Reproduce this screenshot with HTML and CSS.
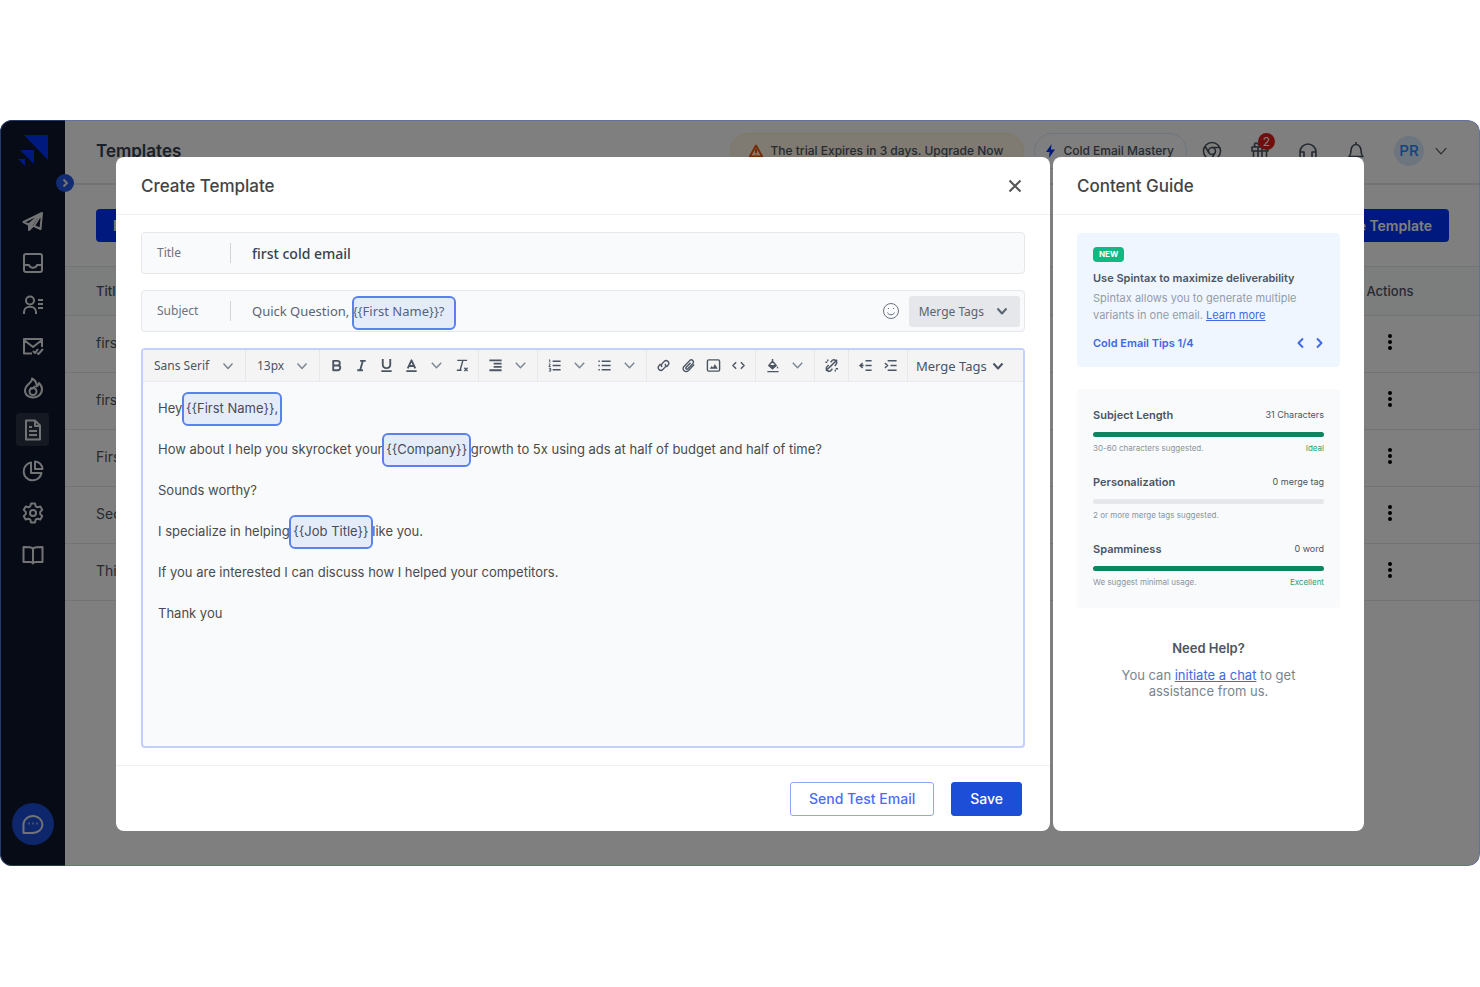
FILE: index.html
```html
<!DOCTYPE html>
<html lang="en">
<head>
<meta charset="utf-8">
<title>Templates</title>
<link rel="stylesheet" href="styles.css">
</head>

<body>
<svg class="defs" aria-hidden="true">
	<symbol id="chev" viewBox="0 0 12 12"><path d="M1.500 3.500 6 8.500l4.500-5"/></symbol>
	<symbol id="dots" viewBox="0 0 6 18"><circle cx="3" cy="3" r="2"/><circle cx="3" cy="9" r="2"/><circle cx="3" cy="15" r="2"/></symbol>
</svg>
<div class="app">
	<aside class="side">
		<a class="logo" href="#" aria-label="Home">
			<svg width="30" height="31" viewBox="0 0 30 31"><path d="M6 0h24v25zM2 15h14v14zM0 24h7v7z"/></svg>
		</a>
		<button class="toggle" aria-label="Expand menu"><svg class="ico" width="10" height="10" viewBox="0 0 10 10"><path d="M3.500 1.500 7 5 3.500 8.500"/></svg></button>
		<nav class="nav">
			<a href="#" aria-label="Campaigns"><svg class="ico" viewBox="0 0 22 22"><path d="M20 2 1.500 11l5 2.500L20 2l-1.500 16-6.500-3L20 2M7 13.500V19l4-4"/><path class="solid" d="M7 13.500 17 5l-6 9.500L7 19z"/></svg></a>
			<a href="#" aria-label="Inbox"><svg class="ico" viewBox="0 0 22 22"><rect x="2" y="2" width="18" height="18" rx="2"/><path d="M2 13h5c1 3.500 7 3.500 8 0h5"/></svg></a>
			<a href="#" aria-label="Prospects"><svg class="ico" viewBox="0 0 22 22"><circle cx="8" cy="6.500" r="4"/><path d="M2 20v-2c0-7 12-7 12 0v2M16 6h5M16 10h5M16 14h5"/></svg></a>
			<a href="#" aria-label="Mail verify"><svg class="ico" viewBox="0 0 22 22"><path d="M10 18.500H2V4h18v8M2 5l9 7 9-7M11 16l2 2 3-4M15 18l1.500 1 4.500-5"/></svg></a>
			<a href="#" aria-label="Warm up"><svg class="ico" viewBox="0 0 22 22"><path d="M10 1.500c1 4-7 6-7 12C3 23 20 23 20 12c0-3-2-5-3-6-.500 2-1 3-2.500 3.500C15 6 13 3 10 1.500z"/><circle cx="11" cy="14.500" r="3.500"/><path d="M8 11c2 1 4 0 5-2"/></svg></a>
			<a class="on" href="#" aria-label="Templates"><svg class="ico" viewBox="0 0 22 22"><path d="M4 1.500h9l5 5V20.500H4zM13 2v5h5M7 8h3M7 12h8M7 16h8"/></svg></a>
			<a href="#" aria-label="Reports"><svg class="ico" viewBox="0 0 22 22"><path d="M9 2.500A9 9 0 1 0 19.500 13H9zM13 1.500V9h7.500A8 8 0 0 0 13 1.500z"/></svg></a>
			<a href="#" aria-label="Settings"><svg class="ico" viewBox="0 0 22 22"><path d="M9 1.500h4l.7 2.800 1.800 1 2.800-.8 2 3.400-2.100 2v2.200l2.100 2-2 3.400-2.800-.8-1.800 1-.7 2.800H9l-.7-2.800-1.800-1-2.800.8-2-3.400 2.100-2V9.900l-2.100-2 2-3.400 2.800.8 1.800-1z"/><circle cx="11" cy="11" r="3"/></svg></a>
			<a href="#" aria-label="Guides"><svg class="ico" viewBox="0 0 22 22"><path d="M11 5C10 3 7 3 1.500 3v15H8c2 0 3 .500 3 1.500 0-1 1-1.500 3-1.500h6.500V3C15 3 12 3 11 5zv14"/></svg></a>
		</nav>
		<button class="chat" aria-label="Chat"><svg class="ico" width="22" height="22" viewBox="0 0 22 22"><path d="M1.500 20V10.500a9.500 8.500 0 1 1 9.500 9.500zM6.500 10.500h1M10.500 10.500h1M14.500 10.500h1"/></svg></button>
	</aside>

	<main class="main">
		<header class="top">
			<h1>Templates</h1>
			<a class="pill trial" href="#"><svg class="ico" width="14" height="14" viewBox="0 0 14 14"><path d="M7 1.500.800 12.500h12.400zM7 5v4M7 10.500v.5"/></svg>The trial Expires in 3 days. Upgrade Now</a>
			<a class="pill mastery" href="#"><svg width="9" height="14" viewBox="0 0 9 14"><path d="M5.500 0 0 8h3.500L3 14l6-8.500H5z"/></svg>Cold Email Mastery</a>
			<div class="tools">
				<button aria-label="Chrome extension"><svg class="ico" viewBox="0 0 20 20"><circle cx="10" cy="10" r="8.500"/><circle cx="10" cy="10" r="3.500"/><path d="M10 6.500h7.500M7 12 3 5M13 12l-4 6.500"/></svg></button>
				<button aria-label="Rewards"><svg class="ico" viewBox="0 0 20 20"><path d="M2 6h16v4H2zM3.500 10v8.500h13V10M8 6v12M12 6v12M10 6C8 1 4 1 4.500 4.500L6 6M10 6c2-5 6-5 5.500-1.500L14 6"/></svg><span class="count">2</span></button>
				<button aria-label="Support"><svg class="ico" viewBox="0 0 20 20"><path d="M2 16v-5a8 8 0 0 1 16 0v5M2 11h4v6H2zM14 11h4v6h-4z"/></svg></button>
				<button aria-label="Notifications"><svg class="ico" viewBox="0 0 20 20"><path d="M10 1v2M3 15.500h14c-2-2-2-3-2-6a5 6 0 0 0-10 0c0 3 0 4-2 6zM8 18h4"/></svg></button>
			</div>
			<button class="user"><span class="avatar">PR</span><svg class="ico" width="14" height="14"><use href="#chev"/></svg></button>
		</header>
		<div class="actions">
			<button>Import</button>
			<button>Create Template</button>
		</div>
		<table class="list">
			<thead><tr><th>Title</th><th>Actions</th></tr></thead>
			<tbody>
				<tr><td>first</td><td><button aria-label="More"><svg width="6" height="18"><use href="#dots"/></svg></button></td></tr>
				<tr><td>first</td><td><button aria-label="More"><svg width="6" height="18"><use href="#dots"/></svg></button></td></tr>
				<tr><td>First</td><td><button aria-label="More"><svg width="6" height="18"><use href="#dots"/></svg></button></td></tr>
				<tr><td>Sec</td><td><button aria-label="More"><svg width="6" height="18"><use href="#dots"/></svg></button></td></tr>
				<tr><td>Thi</td><td><button aria-label="More"><svg width="6" height="18"><use href="#dots"/></svg></button></td></tr>
			</tbody>
		</table>
	</main>

	<div class="overlay">
		<section class="panel modal">
			<header class="head">
				<h2>Create Template</h2>
				<button aria-label="Close"><svg class="ico" width="14" height="14" viewBox="0 0 14 14"><path d="m1.500 1.500 11 11M12.500 1.500l-11 11"/></svg></button>
			</header>
			<div class="form">
				<div class="field">
					<label for="title">Title</label>
					<input class="strong" id="title" type="text" value="first cold email">
				</div>
				<div class="field">
					<label for="subject">Subject</label>
					<div class="subject">
						<input id="subject" type="text" value="Quick Question, {{First Name}}?">
						<span class="frame"></span>
					</div>
					<button class="emoji" aria-label="Emoji"><svg class="ico" width="18" height="18" viewBox="0 0 18 18"><circle cx="9" cy="9" r="7.500"/><path d="M5.500 10.500c1 3 6 3 7 0M6.500 6v1M11.500 6v1"/></svg></button>
					<button class="merge">Merge Tags<svg class="ico" width="12" height="12"><use href="#chev"/></svg></button>
				</div>
				<div class="editor">
					<div class="bar">
						<div class="grp"><label class="pick font"><select aria-label="Font"><option>Sans Serif</option></select><svg class="ico thin" width="12" height="12"><use href="#chev"/></svg></label></div>
						<div class="grp"><label class="pick size"><select aria-label="Size"><option>13px</option></select><svg class="ico thin" width="12" height="12"><use href="#chev"/></svg></label></div>
						<div class="grp">
							<button aria-label="Bold"><svg class="ico bold" viewBox="0 0 16 16"><path d="M4.500 3H9a2.500 2.500 0 0 1 0 5H4.500zM4.500 8h5a2.500 2.500 0 0 1 0 5h-5z"/></svg></button>
							<button aria-label="Italic"><svg class="ico bold" viewBox="0 0 16 16"><path d="M6.500 3h6M3.500 13h6M9.500 3l-3 10"/></svg></button>
							<button aria-label="Underline"><svg class="ico bold" viewBox="0 0 16 16"><path d="M4 2v5c0 5 8 5 8 0V2M2.500 14h11M3 2h2M11 2h2"/></svg></button>
							<button aria-label="Text colour"><svg class="ico bold" viewBox="0 0 16 16"><path d="M4 11 8 2.500 12 11M5.500 8.500h5M2.500 14h11"/></svg></button>
							<button aria-label="Text colours"><svg class="ico thin" viewBox="0 0 16 16"><path d="m3 5 5 5.500L13 5"/></svg></button>
							<button aria-label="Clear format"><svg class="ico" viewBox="0 0 16 16"><path d="M3.500 2.500H14M9.500 2.500 6.500 13M3 13h5M11 10.500l3.500 3.500M14.500 10.500 11 14"/></svg></button>
						</div>
						<div class="grp">
							<button aria-label="Align"><svg class="ico bold" viewBox="0 0 16 16"><path d="M1.500 2.500h13M6 6h8.500M6 9.500h8.500M1.500 13h13"/></svg></button>
							<button aria-label="Alignments"><svg class="ico thin" viewBox="0 0 16 16"><path d="m3 5 5 5.500L13 5"/></svg></button>
						</div>
						<div class="grp">
							<button aria-label="Numbered list"><svg class="ico" viewBox="0 0 16 16"><path d="M6 3.500h8.500M6 8h8.500M6 12.500h8.500"/><path class="fine" d="M2 2h1v3M2 6.500h1.500L2 9h2M2 11h2v3H2M2.500 12.500H4"/></svg></button>
							<button aria-label="Numbered styles"><svg class="ico thin" viewBox="0 0 16 16"><path d="m3 5 5 5.500L13 5"/></svg></button>
							<button aria-label="Bullet list"><svg class="ico" viewBox="0 0 16 16"><path d="M5 3.500h9.500M5 8h9.500M5 12.500h9.500M1.500 3.500H3M1.500 8H3M1.500 12.500H3"/></svg></button>
							<button aria-label="Bullet styles"><svg class="ico thin" viewBox="0 0 16 16"><path d="m3 5 5 5.500L13 5"/></svg></button>
						</div>
						<div class="grp">
							<button aria-label="Link"><svg class="ico" viewBox="0 0 16 16"><path d="M6.500 9.500c-1.500-1.500-1-2.500 0-3.500l2.500-2.500c2-2 6.500 1 4 4L11 9.500M9.500 6.500c1.500 1.500 1 2.500 0 3.500L7 12.500c-2 2-6.500-1-4-4L5 6.500"/></svg></button>
							<button aria-label="Attach"><svg class="ico" viewBox="0 0 16 16"><path d="m14 7-6 6.300c-3.200 3-7.800-1-4.800-4.300l6-6.200c2.300-2.300 5.500.8 3.300 3.200L7.200 11.500c-1.200 1-2.700-.3-1.700-1.600l4.700-4.900"/></svg></button>
							<button aria-label="Image"><svg class="ico" viewBox="0 0 16 16"><rect x="1.500" y="2" width="13" height="12" rx="1.500"/><path class="solid" d="m4 11.500 2-3 1.500 1.500L9.500 6.500l3 5z"/></svg></button>
							<button aria-label="Code"><svg class="ico" viewBox="0 0 16 16"><path d="M5.500 4.500 2 8l3.500 3.500M10.500 4.500 14 8l-3.500 3.500"/></svg></button>
						</div>
						<div class="grp">
							<button aria-label="Fill colour"><svg class="ico" viewBox="0 0 16 16"><path d="M2.500 14.500h12M8 1v3M4 8l4-4.500L12 8l-4 3.500z"/><path class="solid" d="M4 7.500h8L8 12zM13 8.500l1.500 2.500h-2z"/></svg></button>
							<button aria-label="Fill colours"><svg class="ico thin" viewBox="0 0 16 16"><path d="m3 5 5 5.500L13 5"/></svg></button>
						</div>
						<div class="grp">
							<button aria-label="Unlink"><svg class="ico" viewBox="0 0 16 16"><path d="m7 4.500 2-2c2-2 6 1.500 4 4l-1.500 2M9 11.500l-2 2c-2 2-6-1.500-4-4L5 7.500M6.500 9.500l3-3M4 1.500v2M1.500 4.500h2M12 12.500v2M12.500 11.500h2.500M2 13.500 14 2"/></svg></button>
						</div>
						<div class="grp">
							<button aria-label="Outdent"><svg class="ico" viewBox="0 0 16 16"><path d="M8 3h6.500M8 8h6.500M8 13h6.500M5 5.500 2 8l3 2.500M2 8h4"/></svg></button>
							<button aria-label="Indent"><svg class="ico" viewBox="0 0 16 16"><path d="M5 3h9.500M8 8h6.500M5 13h9.500M2 5.500 5 8l-3 2.500"/></svg></button>
						</div>
						<button class="tags">Merge Tags<svg class="ico" width="12" height="12"><use href="#chev"/></svg></button>
					</div>
					<div class="text" contenteditable="true" role="textbox" aria-label="Email body" spellcheck="false">
						<p>Hey <mark>{{First Name}},</mark></p>
						<p>How about I help you skyrocket your <mark>{{Company}}</mark> growth to 5x using ads at half of budget and half of time?</p>
						<p>Sounds worthy?</p>
						<p>I specialize in helping <mark>{{Job Title}}</mark> like you.</p>
						<p>If you are interested I can discuss how I helped your competitors.</p>
						<p>Thank you</p>
					</div>
				</div>
			</div>
			<footer class="foot">
				<button class="test">Send Test Email</button>
				<button class="save">Save</button>
			</footer>
		</section>

		<aside class="panel guide">
			<header class="head"><h2>Content Guide</h2></header>
			<div class="cards">
				<div class="tip">
					<span class="new">NEW</span>
					<h3>Use Spintax to maximize deliverability</h3>
					<p>Spintax allows you to generate multiple variants in one email. <a href="#">Learn more</a></p>
					<div class="pager">
						<b>Cold Email Tips 1/4</b>
						<button aria-label="Previous tip"><svg class="ico" width="10" height="12" viewBox="0 0 10 12"><path d="M7 1.500 2.500 6 7 10.500"/></svg></button>
						<button aria-label="Next tip"><svg class="ico" width="10" height="12" viewBox="0 0 10 12"><path d="M3 1.500 7.500 6 3 10.500"/></svg></button>
					</div>
				</div>
				<div class="stats">
					<div class="stat">
						<div class="row"><h3>Subject Length</h3><span>31 Characters</span></div>
						<div class="meter full"></div>
						<div class="row note"><span>30-60 characters suggested.</span><em>Ideal</em></div>
					</div>
					<div class="stat">
						<div class="row"><h3>Personalization</h3><span>0 merge tag</span></div>
						<div class="meter"></div>
						<div class="row note"><span>2 or more merge tags suggested.</span></div>
					</div>
					<div class="stat">
						<div class="row"><h3>Spamminess</h3><span>0 word</span></div>
						<div class="meter full"></div>
						<div class="row note"><span>We suggest minimal usage.</span><em>Excellent</em></div>
					</div>
				</div>
				<div class="help">
					<h3>Need Help?</h3>
					<p>You can <a href="#">initiate a chat</a> to get assistance from us.</p>
				</div>
			</div>
		</aside>
	</div>
</div>
</body>
</html>
```

FILE: styles.css
```css
*{margin:0; padding:0; box-sizing:border-box;}
body{padding:120px 0; background:#fff; font-family:Inter,"Liberation Sans",sans-serif; font-size:13px; color:#4b5563;}
button,input,select{font:inherit; color:inherit; border:none; outline:none; background:none;}
button{display:flex; align-items:center; justify-content:center; cursor:pointer;}
a{color:inherit;}
em{font-style:normal;}
.defs{position:absolute; width:0; height:0;}
.ico{fill:none; stroke:currentColor; stroke-width:2; stroke-linejoin:round;}
.ico .solid{fill:currentColor; stroke:none;}
.ico .fine{stroke-width:1;}

.app{position:relative; display:flex; min-height:746px; border-radius:12px; overflow:hidden;}

/* sidebar */
.side{position:relative; flex:none; display:flex; flex-direction:column; align-items:center; width:65px; padding:15px 0 21px; background:#0f172a; color:#e5e7eb;}
.logo{height:70px;}
.logo svg{fill:#0032ff;}
.toggle{position:absolute; right:-9px; top:54px; width:18px; height:18px; border-radius:50%; background:#2458e8; z-index:1;}
.nav{display:flex; flex-direction:column; justify-content:space-between; height:366px;}
.nav a{display:flex; align-items:center; justify-content:center; width:33px; height:33px; border-radius:4px;}
.nav a.on{background:#2b3342;}
.nav svg{width:22px; height:22px;}
.chat{width:42px; height:42px; margin-top:auto; border-radius:50%; background:#1d4ed8;}

/* page behind */
.main{flex:1;}
.top{display:flex; align-items:center; height:65px; padding:0 32px 2px 31px; border-bottom:2px solid #e5e7eb;}
.top h1{margin-right:auto; font-size:17px; font-weight:600; color:#374151;}
.pill{display:flex; align-items:center; height:36px; border:1px solid; border-radius:18px; font-size:12px; font-weight:500; text-decoration:none;}
.trial{gap:7px; padding:0 20px 0 18px; margin-right:10px; border-color:#fdeec0; background:#fff7e6;}
.trial .ico{color:#ea580c;}
.mastery{gap:8px; padding:0 12px 0 11px; border-color:#dbeafe;}
.mastery svg{fill:#0032ff;}
.top .tools,.user .ico{stroke-width:1;}
.tools{display:flex; gap:28px; margin:0 28px 0 15px;}
.tools button{position:relative;}
.tools svg{width:20px; height:20px; stroke-width:1.6;}
.count{position:absolute; left:8px; top:-8px; width:17px; height:17px; border-radius:50%; background:#e11d1d; color:#fff; font-size:12px; line-height:17px;}
.user{gap:10px;}
.avatar{width:30px; height:30px; border-radius:50%; background:#dbeafe; color:#1d8cf8; font-size:15px; font-weight:500; line-height:30px;}
.actions{display:flex; justify-content:space-between; padding:24px 31px;}
.actions button{height:33px; padding:0 17px; border-radius:4px; background:#0032ff; color:#fff; font-size:14px; font-weight:600;}
.list{width:100%; border-collapse:collapse;}
.list th,.list td{height:57px; padding:0 31px; border-bottom:1px solid #e5e7eb; font-size:14px; font-weight:400; text-align:left;}
.list td{padding-bottom:4px;}
.list th{height:49px; background:#f9fafb; border-top:1px solid #e5e7eb; font-size:13px; font-weight:500;}
.list th:last-child,.list td:last-child{width:180px; text-align:center;}
.list button{margin:0 auto;}
.list td svg{fill:#000;}

/* dialog */
.overlay{position:absolute; top:0; right:0; bottom:0; left:0; z-index:2; display:flex; gap:3px; padding:36px 115px 34px; border:1px solid rgba(70,100,190,.5); border-radius:12px; background:rgba(0,0,0,.5);}
.panel{display:flex; flex-direction:column; border-radius:8px; background:#fff;}
.modal{flex:1; min-width:0;}
.head{display:flex; align-items:center; justify-content:space-between; height:58px; padding:0 28px 0 25px; border-bottom:1px solid #eef0f2;}
.head h2{font-size:17px; font-weight:500; color:#444;}
.head .ico{color:#555;}
.form{flex:1; display:flex; flex-direction:column; gap:16px; padding:17px 25px;}
.field{display:flex; align-items:center; height:42px; padding:0 4px 0 15px; border:1px solid #e5e7eb; border-radius:4px; background:#f9fafb; font-family:"Noto Sans",sans-serif; color:#5b6472;}
.field label{width:74px; border-right:1px solid #d1d5db; font-size:12px; line-height:20px; color:#6b7280;}
.field input{flex:1; width:100%; padding-left:21px; font-size:13px;}
.field .strong{font-size:14px; font-weight:500; color:#374151;}
.subject{position:relative; flex:1; display:flex;}
.frame{position:absolute; left:121px; top:50%; width:104px; height:34px; margin-top:-15px; border:2px solid #5b82ec; border-radius:6px; background:rgba(37,99,235,.09); pointer-events:none;}
.emoji{margin-right:9px; color:#6b7280;}
.emoji svg{stroke-width:1;}
.merge{gap:12px; height:31px; padding:0 12px 0 10px; border-radius:3px; background:#e5e7eb; font-size:12px;}

.editor{flex:1; display:flex; flex-direction:column; border:2px solid #c3d0fb; border-radius:4px; background:#f9fafb;}
.bar{display:flex; height:32px; border-bottom:1px solid #e8eaed; background:#f4f4f5; font-family:"Noto Sans",sans-serif; font-size:12px;}
.grp{display:flex; padding:0 4px; border-right:1px solid #e5e7eb;}
.grp button{width:25px; color:#4b5563;}
.grp svg{width:15px; height:15px; stroke-width:1.5;}
.grp .bold{stroke-width:2;}
.ico.thin{color:#7b8794;}
.pick{display:flex; align-items:center; position:relative; padding:0 7px;}
.pick svg{position:absolute; right:7px; width:12px; height:12px;}
.pick select{appearance:none; width:100%;}
.font{width:94px;}
.size{width:65px;}
.tags{gap:5px; padding:0 8px; font-size:13px;}
.text{padding:18px 15px; outline:none; color:#4b4b4b; line-height:17px;}
.text p{margin-bottom:24px;}
.text mark{position:relative; background:none; color:inherit;}
.text mark:after{content:""; position:absolute; left:-4px; right:-4px; top:-8px; bottom:-10px; border:2px solid #5b82ec; border-radius:6px; background:rgba(37,99,235,.09);}
.foot{display:flex; align-items:center; justify-content:flex-end; gap:17px; height:66px; padding:0 28px; border-top:1px solid #eef0f2;}
.foot button{height:34px; padding:0 18px; border:1px solid #8ea5fb; border-radius:3px; font-size:14px; font-weight:500; color:#4a6cf7;}
.foot .save{border-color:#1d4ed8; background:#1d4ed8; color:#fff;}

/* content guide */
.guide{width:311px;}
.guide .head{padding:0 24px;}
.cards{padding:18px 24px;}
.tip{padding:14px 16px 16px; border-radius:4px; background:#eff6ff;}
.new{display:block; width:fit-content; padding:0 6px; border-radius:4px; background:#10b981; color:#fff; font-size:8px; font-weight:700; line-height:15px;}
.tip h3,.stat h3{font-size:11px; font-weight:600; line-height:18px;}
.tip h3{margin-top:7px;}
.tip p{margin-top:3px; font-size:11px; line-height:17px; color:#949ba8;}
.cards a{color:#4169e1;}
.pager{display:flex; align-items:center; gap:8px; margin-top:11px; font-size:11px; line-height:16px; color:#4169e1;}
.pager b{margin-right:auto; font-weight:600;}
.stats{display:flex; flex-direction:column; gap:19px; margin-top:22px; padding:17px 16px 20px; border-radius:4px; background:#f9fafb;}
.row{display:flex; justify-content:space-between; font-size:9px; line-height:18px;}
.meter{height:5px; margin:8px 0 5px; border-radius:3px; background:#e5e7eb;}
.meter.full{background:#0e8560;}
.note{font-size:8px; line-height:12px; color:#8b93a1;}
.note em{color:#23a576;}
.help{width:180px; margin:32px auto 0; text-align:center; line-height:16px; color:#7b8391;}
.help h3{margin-bottom:11px; font-size:13px; font-weight:600; color:#4b5563;}
```
